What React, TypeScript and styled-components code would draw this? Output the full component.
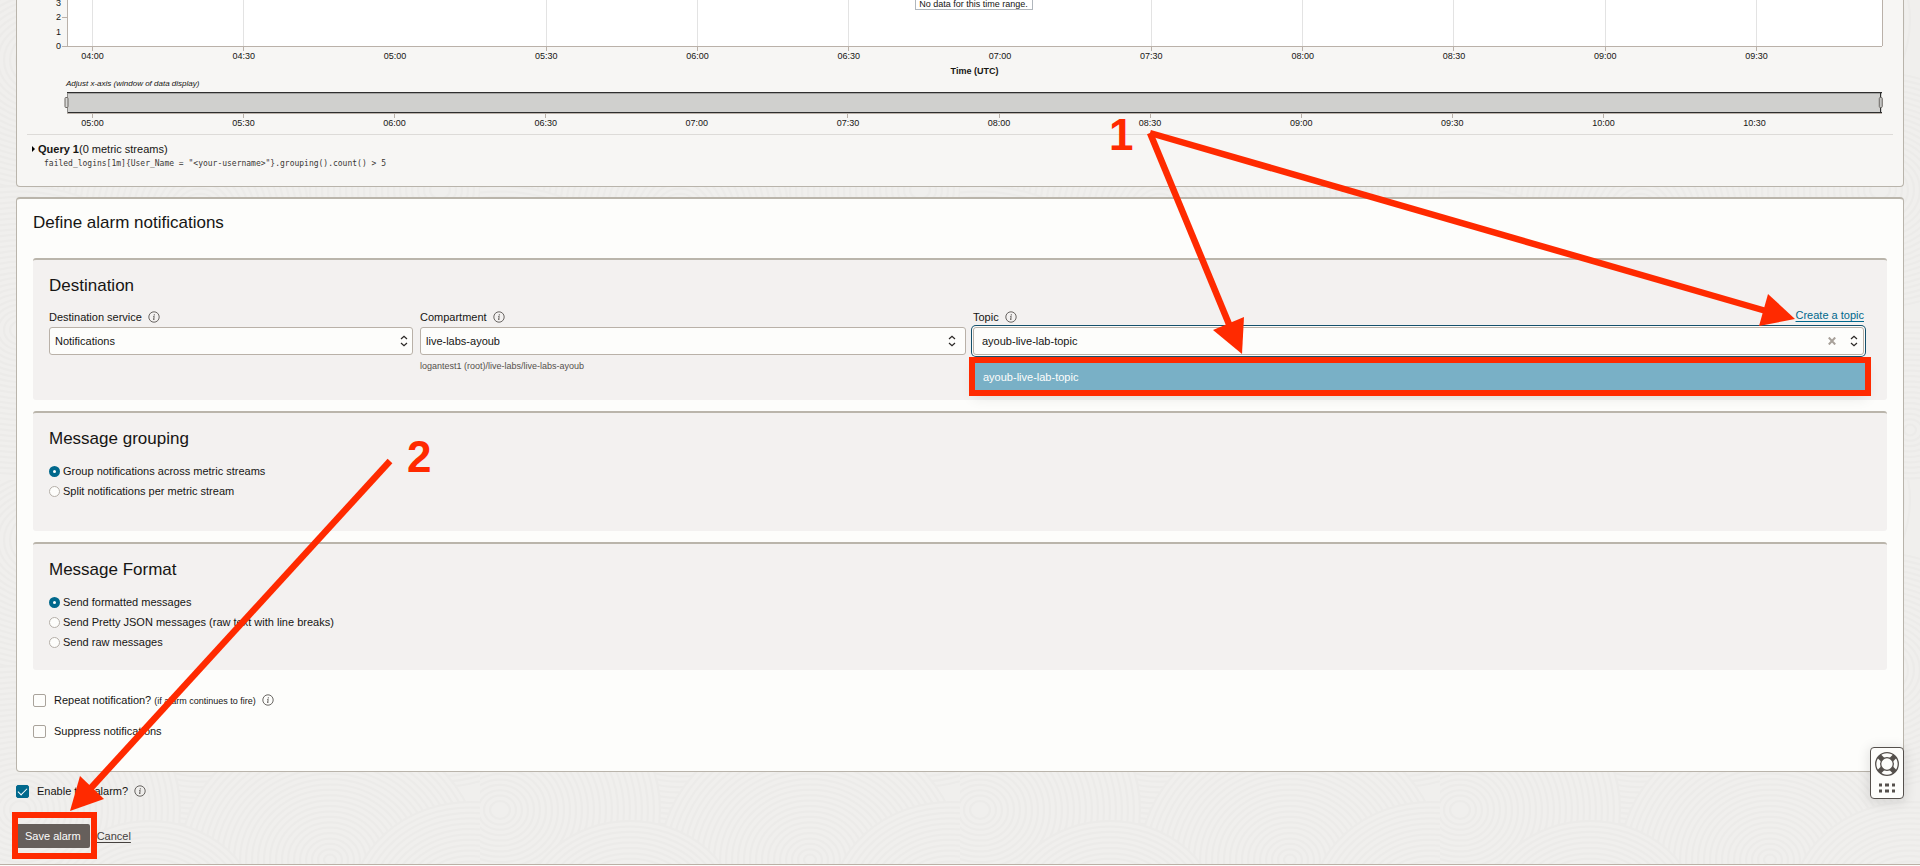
import React, { useState } from "react";
import styled, { createGlobalStyle, css } from "styled-components";

const GlobalStyle = createGlobalStyle`
  *, *::before, *::after { box-sizing: border-box; }
  body {
    margin: 0;
    background: #fdfdfb;
    color: #161513;
    font-family: "Liberation Sans", Arial, sans-serif;
    font-size: 11px;
    line-height: 16px;
  }
`;

const Page = styled.div`
  position: relative;
  overflow: hidden;
`;

const Main = styled.main`
  position: relative;
  isolation: isolate;
  padding: 0 16px 16px;
  background: #f0efed;
  border-bottom: 1px solid #bab1a6;
`;

const Backdrop = styled.svg`
  position: absolute;
  inset: 0;
  z-index: -1;
  width: 100%;
  height: 100%;
`;

const ChartPanel = styled.section`
  padding: 0 10px 8px;
  background: #f7f6f4;
  border: 1px solid #b9b4ab;
  border-top: 0;
  border-radius: 0 0 4px 4px;
`;

const ChartArea = styled.div`
  height: 135px;
  padding: 0 11px 0 40px;
  border-bottom: 1px solid #dddbd8;
`;

const Chart = styled.svg`
  display: block;
  width: 100%;
  height: 134px;
  overflow: visible;
  font-size: 9px;
  fill: #161513;
`;

const Query = styled.details`
  padding: 5px 5px 0;
`;

const QuerySummary = styled.summary`
  display: flex;
  align-items: center;
  height: 18px;
  list-style: none;
  &::-webkit-details-marker { display: none; }
`;

const Caret = styled.svg`
  width: 3px;
  height: 6px;
  margin-right: 3px;
`;

const QueryText = styled.code`
  display: block;
  margin: 0 10px 8px 17px;
  color: #3a3735;
  font-family: "DejaVu Sans Mono", monospace;
  font-size: 8px;
  line-height: 12px;
`;

const Panel = styled.section`
  margin-top: 10px;
  padding: 14px 16px 30px;
  background: #fdfdfb;
  border: 1px solid #b9b4ab;
  border-top: 2px solid #bab5ab;
  border-radius: 4px;
`;

const PanelTitle = styled.h2`
  margin: 0 0 25px;
  font-size: 17px;
  font-weight: 400;
  line-height: 20px;
`;

const Box = styled.section<{ $bottom: number }>`
  margin-bottom: 11px;
  padding: 16px 23px ${(p) => p.$bottom}px 16px;
  background: #f3f1f0;
  border-top: 2px solid #bab5ab;
  border-radius: 3px;
`;

const BoxTitle = styled.h3`
  margin: 0 0 12px;
  font-size: 17px;
  font-weight: 400;
  line-height: 20px;
`;

const Fields = styled.div`
  display: grid;
  grid-template-columns: 364fr 546fr 891fr;
  gap: 7px;
`;

const Field = styled.div`
  min-width: 0;
`;

const FieldHead = styled.div`
  display: flex;
  align-items: center;
  height: 17px;
  margin-bottom: 2px;
`;

const TopicLink = styled.a`
  align-self: flex-start;
  margin-left: auto;
  color: #00688c;
  line-height: 15px;
  text-decoration: underline;
  text-underline-offset: 2px;
`;

const InfoButton = styled.button`
  display: flex;
  margin: 0 0 0 6px;
  padding: 0;
  background: none;
  border: 0;
  color: #45413e;
`;

const Control = styled.div`
  position: relative;
`;

const inputBase = css`
  display: block;
  width: 100%;
  height: 28px;
  margin: 0;
  background: #fdfdfb;
  border: 1px solid #b9b1a8;
  border-radius: 3px;
  color: #161513;
  font: inherit;
  outline: 0;
`;

const Select = styled.select`
  ${inputBase}
  padding: 0 24px 0 5px;
  appearance: none;
`;

const Combo = styled.input`
  ${inputBase}
  padding: 0 52px 0 8px;
  box-shadow: 0 0 0 1px #fdfdfb, 0 0 0 2px #14506b;
`;

const Arrows = styled.svg<{ $right: number }>`
  position: absolute;
  top: 8px;
  right: ${(p) => p.$right}px;
  width: 8px;
  height: 12px;
  pointer-events: none;
`;

const ClearButton = styled.button`
  position: absolute;
  top: 10px;
  right: 28px;
  display: flex;
  padding: 0;
  background: none;
  border: 0;
`;

const Hint = styled.p`
  margin: 5px 0 0;
  color: #55504c;
  font-size: 9px;
  line-height: 12px;
`;

const ListBox = styled.ul`
  position: absolute;
  top: 36px;
  left: 2px;
  right: -1px;
  margin: 0;
  padding: 0;
  list-style: none;
  box-shadow: 0 6px 14px 2px rgba(0, 0, 0, 0.09);
`;

const Option = styled.li`
  height: 27px;
  padding: 0 8px;
  background: #79b0c6;
  color: #fdfdfb;
  line-height: 29px;
`;

const Highlight = styled.span<{ $inset: string }>`
  position: absolute;
  inset: ${(p) => p.$inset};
  border: 6px solid #ff2a00;
  pointer-events: none;
`;

const RadioRow = styled.label`
  display: flex;
  align-items: center;
  height: 20px;
  gap: 3px;
`;

const Radio = styled.input`
  appearance: none;
  width: 11px;
  height: 11px;
  margin: 0;
  background: #fdfdfb;
  border: 1px solid #b5afa8;
  border-radius: 50%;
  &:checked {
    border: 4px solid #00688c;
  }
`;

const CheckRow = styled.div<{ $top: number }>`
  display: flex;
  align-items: center;
  height: 20px;
  margin-top: ${(p) => p.$top}px;
`;

const CheckLabel = styled.label`
  display: flex;
  align-items: center;
  gap: 8px;
`;

const Check = styled.input`
  appearance: none;
  position: relative;
  width: 13px;
  height: 13px;
  margin: 0;
  background: #fdfdfb;
  border: 1px solid #a9a39b;
  border-radius: 2px;
  &:checked {
    background: #00688c;
    border-color: #00688c;
  }
  &:checked::after {
    content: "";
    position: absolute;
    top: 2px;
    left: 1px;
    width: 9px;
    height: 5px;
    border: solid #fff;
    border-width: 0 0 1px 1px;
    transform: rotate(-45deg);
  }
`;

const Small = styled.small`
  font-size: 9px;
`;

const Actions = styled.div`
  display: flex;
  align-items: center;
  gap: 7px;
  margin-top: 23px;
`;

const SaveButton = styled.button`
  position: relative;
  height: 24px;
  padding: 0 9px;
  background: #665f5b;
  border: 0;
  border-radius: 2px;
  color: #fdfdfb;
  font: inherit;
`;

const CancelLink = styled.a`
  color: #45413e;
  text-decoration: underline;
  text-underline-offset: 2px;
`;

const HelpWidget = styled.button`
  position: absolute;
  right: 16px;
  bottom: 65px;
  display: flex;
  width: 34px;
  height: 52px;
  padding: 0;
  background: #fdfdfb;
  border: 1px solid #55504c;
  border-radius: 4px;
  box-shadow: 0 2px 12px 2px rgba(0, 0, 0, 0.1);
`;

const Annotations = styled.svg`
  position: absolute;
  top: 0;
  left: 0;
  width: 100%;
  pointer-events: none;
  fill: #ff2a00;
  stroke: none;
  font-size: 44px;
  font-weight: 700;
`;

function Info({ topic }: { topic: string }) {
  return (
    <InfoButton type="button" aria-label={`About ${topic}`}>
      <svg width="12" height="12" viewBox="0 0 12 12" fill="none" stroke="currentColor">
        <circle cx="6" cy="6" r="5.2" strokeWidth="0.8" />
        <path d="M5.2 5.4h1L5.700 8.300M5 8.300h1.500" strokeWidth="0.8" />
        <circle cx="6.3" cy="3.8" r="0.6" fill="currentColor" stroke="none" />
      </svg>
    </InfoButton>
  );
}

function UpDown({ right }: { right: number }) {
  return (
    <Arrows $right={right} viewBox="0 0 8 12" fill="none" stroke="#2b2826" strokeWidth="1.2" aria-hidden="true">
      <path d="M1 4 4 1.2 7 4M1 8 4 10.8 7 8" />
    </Arrows>
  );
}

const SWIRLS = [
  [40, 60, 150], [330, 20, 140], [200, 210, 150], [440, 190, 130],
  [20, 330, 160], [330, 380, 150], [150, 440, 110], [470, 430, 120],
];

function Swirls() {
  return (
    <Backdrop aria-hidden="true">
      <defs>
        <pattern id="swirls" width="480" height="480" patternUnits="userSpaceOnUse">
          {SWIRLS.map(([cx, cy, r]) => (
            <g key={`${cx}-${cy}`}>
              {Array.from({ length: Math.floor(r / 6) }, (_, i) => (
                <ellipse
                  key={i}
                  cx={cx}
                  cy={cy}
                  rx={r - i * 6}
                  ry={(r - i * 6) * 0.9}
                  fill="#f0efed"
                  stroke="#ecebe9"
                  strokeWidth="2"
                />
              ))}
            </g>
          ))}
        </pattern>
      </defs>
      <rect width="100%" height="100%" fill="url(#swirls)" />
    </Backdrop>
  );
}

const MAIN_TICKS = ["04:00", "04:30", "05:00", "05:30", "06:00", "06:30", "07:00", "07:30", "08:00", "08:30", "09:00", "09:30"];
const RANGE_TICKS = ["05:00", "05:30", "06:00", "06:30", "07:00", "07:30", "08:00", "08:30", "09:00", "09:30", "10:00", "10:30"];
const UNMARKED_MAIN = ["05:00", "07:00"];
const UNMARKED_RANGE = ["07:00", "10:30"];
const mainX = (i: number) => `${1.4 + i * 8.335}%`;
const rangeX = (i: number) => `${1.4 + i * 8.325}%`;

function MetricChart() {
  return (
    <Chart role="img" aria-label="Metric chart" shapeRendering="crispEdges">
      <rect width="100%" height="46" fill="#fff" />
      {MAIN_TICKS.map((t, i) => (
        <g key={t}>
          {!UNMARKED_MAIN.includes(t) && (
            <>
              <line x1={mainX(i)} x2={mainX(i)} y1="0" y2="46" stroke="#e3e3e3" />
              <line x1={mainX(i)} x2={mainX(i)} y1="46" y2="51" stroke="#bab1a9" />
            </>
          )}
          <text x={mainX(i)} y="59" textAnchor="middle">{t}</text>
        </g>
      ))}
      <line x1="0" x2="0" y1="0" y2="46" stroke="#bab1a9" />
      <line x1="100%" x2="100%" y1="0" y2="46" stroke="#bab1a9" />
      <line x1="-5" x2="100%" y1="46.5" y2="46.5" stroke="#bab1a9" />
      <line x1="-5" x2="0" y1="17.5" y2="17.5" stroke="#bab1a9" />
      <text x="-6" y="6" textAnchor="end">3</text>
      <text x="-6" y="20" textAnchor="end">2</text>
      <text x="-6" y="35" textAnchor="end">1</text>
      <text x="-6" y="49" textAnchor="end">0</text>
      <svg x="50%" overflow="visible">
        <rect x="-59.5" y="-9.5" width="117" height="19" fill="#fff" stroke="#b0b6bc" />
        <text x="-1" y="7" textAnchor="middle">No data for this time range.</text>
      </svg>
      <text x="50%" y="74" textAnchor="middle" fontWeight="700">Time (UTC)</text>
      <text x="-1" y="86" fontSize="8" fontStyle="italic">Adjust x-axis (window of data display)</text>
      <rect y="92" width="100%" height="21" fill="#d0d0ce" />
      <line x1="0" x2="100%" y1="92.5" y2="92.5" stroke="#2e2e2e" />
      <line x1="0" x2="100%" y1="93.5" y2="93.5" stroke="#a3a3a1" />
      <line x1="0" x2="100%" y1="112.5" y2="112.5" stroke="#2e2e2e" />
      <line x1="0" x2="100%" y1="113.5" y2="113.5" stroke="#bab1a9" />
      <line x1="0" x2="0" y1="93" y2="113" stroke="#8d8b88" />
      <line x1="99.9%" x2="99.9%" y1="93" y2="113" stroke="#2e2e2e" />
      <rect x="-2" y="97.5" width="3" height="10" rx="1" fill="#d8d8d6" stroke="#6b6763" shapeRendering="auto" />
      <rect x="99.85%" y="97.5" width="3" height="10" rx="1" fill="#c4c4c2" stroke="#6b6763" shapeRendering="auto" />
      {RANGE_TICKS.map((t, i) => (
        <g key={t}>
          {!UNMARKED_RANGE.includes(t) && (
            <line x1={rangeX(i)} x2={rangeX(i)} y1="114" y2="118" stroke="#bab1a9" />
          )}
          <text x={rangeX(i)} y="126" textAnchor="middle">{t}</text>
        </g>
      ))}
    </Chart>
  );
}

function RadioGroup({ name, options }: { name: string; options: string[] }) {
  const [value, setValue] = useState(options[0]);
  return (
    <>
      {options.map((o) => (
        <RadioRow key={o}>
          <Radio type="radio" name={name} checked={value === o} onChange={() => setValue(o)} />
          {o}
        </RadioRow>
      ))}
    </>
  );
}

const LIFEBUOY_ANGLES = [45, 135, 225, 315];

export default function App() {
  const [topic, setTopic] = useState("ayoub-live-lab-topic");
  return (
    <Page>
      <GlobalStyle />
      <Main>
        <Swirls />
        <ChartPanel>
          <ChartArea>
            <MetricChart />
          </ChartArea>
          <Query>
            <QuerySummary>
              <Caret viewBox="0 0 3 6"><path d="M0 0 3 3 0 6Z" /></Caret>
              <strong>Query 1</strong>(0 metric streams)
            </QuerySummary>
          </Query>
          <QueryText>{'failed_logins[1m]{User_Name = "<your-username>"}.grouping().count() > 5'}</QueryText>
        </ChartPanel>

        <Panel>
          <PanelTitle>Define alarm notifications</PanelTitle>
          <Box $bottom={28}>
            <BoxTitle>Destination</BoxTitle>
            <Fields>
              <Field>
                <FieldHead>
                  <label htmlFor="service">Destination service</label>
                  <Info topic="destination service" />
                </FieldHead>
                <Control>
                  <Select id="service" defaultValue="Notifications">
                    <option>Notifications</option>
                  </Select>
                  <UpDown right={5} />
                </Control>
              </Field>
              <Field>
                <FieldHead>
                  <label htmlFor="compartment">Compartment</label>
                  <Info topic="compartment" />
                </FieldHead>
                <Control>
                  <Select id="compartment" defaultValue="live-labs-ayoub">
                    <option>live-labs-ayoub</option>
                  </Select>
                  <UpDown right={10} />
                </Control>
                <Hint>logantest1 (root)/live-labs/live-labs-ayoub</Hint>
              </Field>
              <Field>
                <FieldHead>
                  <label htmlFor="topic">Topic</label>
                  <Info topic="topic" />
                  <TopicLink href="#create-topic">Create a topic</TopicLink>
                </FieldHead>
                <Control>
                  <Combo
                    id="topic"
                    role="combobox"
                    aria-expanded="true"
                    aria-controls="topic-list"
                    value={topic}
                    onChange={(e) => setTopic(e.target.value)}
                  />
                  <ClearButton type="button" aria-label="Clear topic" onClick={() => setTopic("")}>
                    <svg width="8" height="8" viewBox="0 0 8 8" stroke="#a8a19a" strokeWidth="2">
                      <path d="M0.800 0.500 7.200 7.500M7.200 0.500 0.800 7.500" />
                    </svg>
                  </ClearButton>
                  <UpDown right={6} />
                  <ListBox id="topic-list" role="listbox">
                    <Option role="option" aria-selected="true">ayoub-live-lab-topic</Option>
                    <Highlight $inset="-6px" aria-hidden="true" />
                  </ListBox>
                </Control>
              </Field>
            </Fields>
          </Box>

          <Box $bottom={30}>
            <BoxTitle>Message grouping</BoxTitle>
            <RadioGroup
              name="grouping"
              options={["Group notifications across metric streams", "Split notifications per metric stream"]}
            />
          </Box>

          <Box $bottom={18}>
            <BoxTitle>Message Format</BoxTitle>
            <RadioGroup
              name="format"
              options={[
                "Send formatted messages",
                "Send Pretty JSON messages (raw text with line breaks)",
                "Send raw messages",
              ]}
            />
          </Box>

          <CheckRow $top={20}>
            <CheckLabel>
              <Check type="checkbox" />
              <span>Repeat notification? <Small>(if alarm continues to fire)</Small></span>
            </CheckLabel>
            <Info topic="repeat notification" />
          </CheckRow>
          <CheckRow $top={11}>
            <CheckLabel>
              <Check type="checkbox" />
              Suppress notifications
            </CheckLabel>
          </CheckRow>
        </Panel>

        <CheckRow $top={9}>
          <CheckLabel>
            <Check type="checkbox" defaultChecked />
            Enable this alarm?
          </CheckLabel>
          <Info topic="enabling this alarm" />
        </CheckRow>
        <Actions>
          <SaveButton type="button">
            Save alarm
            <Highlight $inset="-12px -7px -11px -4px" aria-hidden="true" />
          </SaveButton>
          <CancelLink href="#cancel">Cancel</CancelLink>
        </Actions>

        <HelpWidget type="button" aria-label="Help">
          <svg width="32" height="50" viewBox="0 0 32 50" fill="none" stroke="#55504c">
            <circle cx="16" cy="16" r="11.3" strokeWidth="1.3" />
            <circle cx="16" cy="16" r="6.3" strokeWidth="1.3" />
            {LIFEBUOY_ANGLES.map((a) => (
              <path key={a} d="M22 16H27.3" strokeWidth="5" transform={`rotate(${a} 16 16)`} />
            ))}
            <path d="M8 37h3m3 0h4m3 0h3M8 43h3m3 0h4m3 0h3" strokeWidth="3" />
          </svg>
        </HelpWidget>
      </Main>

      <Annotations viewBox="0 0 1920 866" aria-hidden="true">
        <g stroke="#ff2a00" strokeWidth="6.5">
          <path d="M1150 133 1231 329" />
          <path d="M1150 133 1766 311" />
          <path d="M390 461 90 789" />
        </g>
        <path d="M1242 354 1213 330 1244 317Z" />
        <path d="M1795 319 1768 294 1759 326Z" />
        <path d="M70 811 80 776 104 799Z" />
        <text x="1109" y="150">1</text>
        <text x="407" y="472">2</text>
      </Annotations>
    </Page>
  );
}
